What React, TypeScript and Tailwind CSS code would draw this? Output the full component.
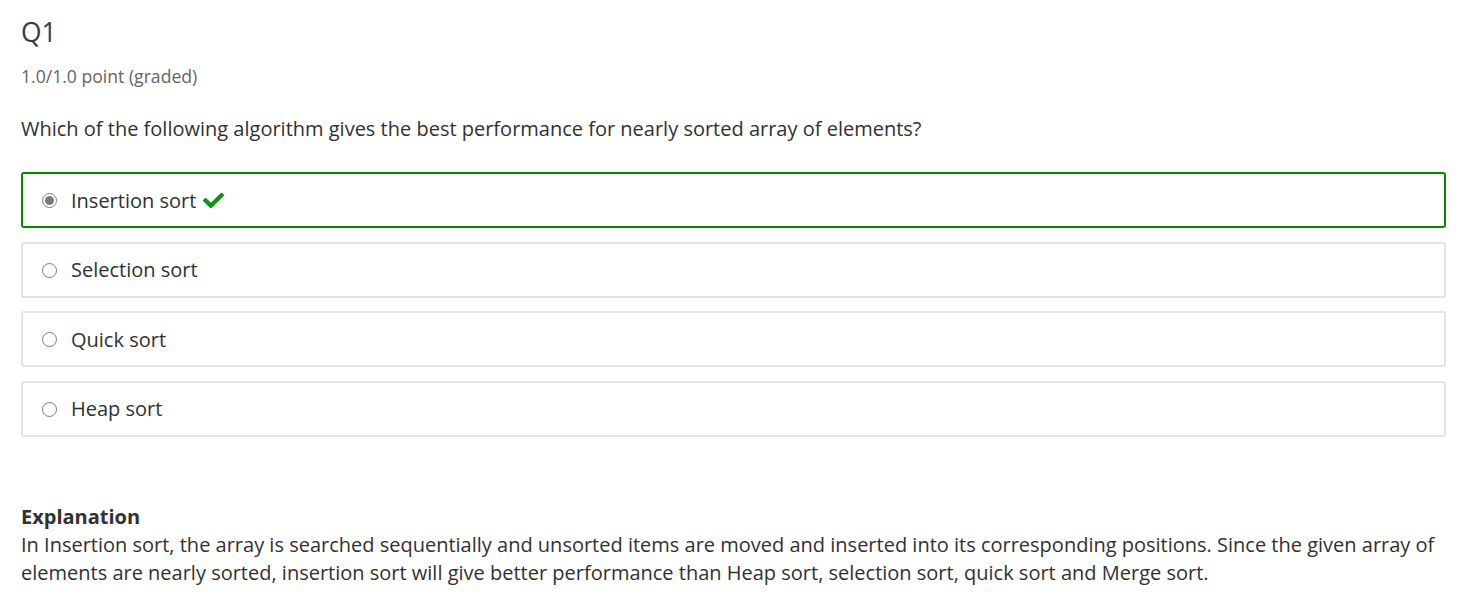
import { FaCheck } from "react-icons/fa";

const options = [
  { label: "Insertion sort", selected: true },
  { label: "Selection sort", selected: false },
  { label: "Quick sort", selected: false },
  { label: "Heap sort", selected: false },
];

function Radio({ checked }: { checked: boolean }) {
  return (
    <span className="w-[15px] h-[15px] rounded-full border border-[#7a7a7a] bg-white flex items-center justify-center shrink-0">
      {checked && <span className="w-[9px] h-[9px] rounded-full bg-[#7a7a7a]" />}
    </span>
  );
}

export default function App() {
  return (
    <div className="bg-white min-h-screen px-[21px] pt-[14px] text-[#313131] font-['Open_Sans',sans-serif]">
      <h3 className="text-[26.4px] leading-[36px] text-[#3a3a3a]">Q1</h3>
      <div className="mt-[15px] text-[17.6px] leading-[22px] text-[#646464]">1.0/1.0 point (graded)</div>
      <p className="mt-[28px] text-[20px] leading-[28px]">
        Which of the following algorithm gives the best performance for nearly sorted array of elements?
      </p>
      <div className="mt-[29px] flex flex-col gap-[13.5px] w-[1425px]">
        {options.map((o) => (
          <label
            key={o.label}
            className={
              o.selected
                ? "h-[56px] rounded-[3px] border-2 border-[#008a00] flex items-center pl-[19px] pt-[1px] gap-[14px] text-[20px]"
                : "h-[56px] rounded-[3px] border-2 border-[#e3e3e3] flex items-center pl-[19px] pt-[1px] gap-[14px] text-[20px]"
            }
          >
            <Radio checked={o.selected} />
            <span>{o.label}</span>
            {o.selected && <FaCheck className="text-[#0a960a] -ml-[7px] text-[21px]" />}
          </label>
        ))}
      </div>
      <div className="mt-[66px] text-[20px] leading-[28px]">
        <div className="font-bold">Explanation</div>
        <p>
          In Insertion sort, the array is searched sequentially and unsorted items are moved and inserted into its corresponding positions. Since the given array of elements are nearly sorted, insertion sort will give better performance than Heap sort, selection sort, quick sort and Merge sort.
        </p>
      </div>
    </div>
  );
}
